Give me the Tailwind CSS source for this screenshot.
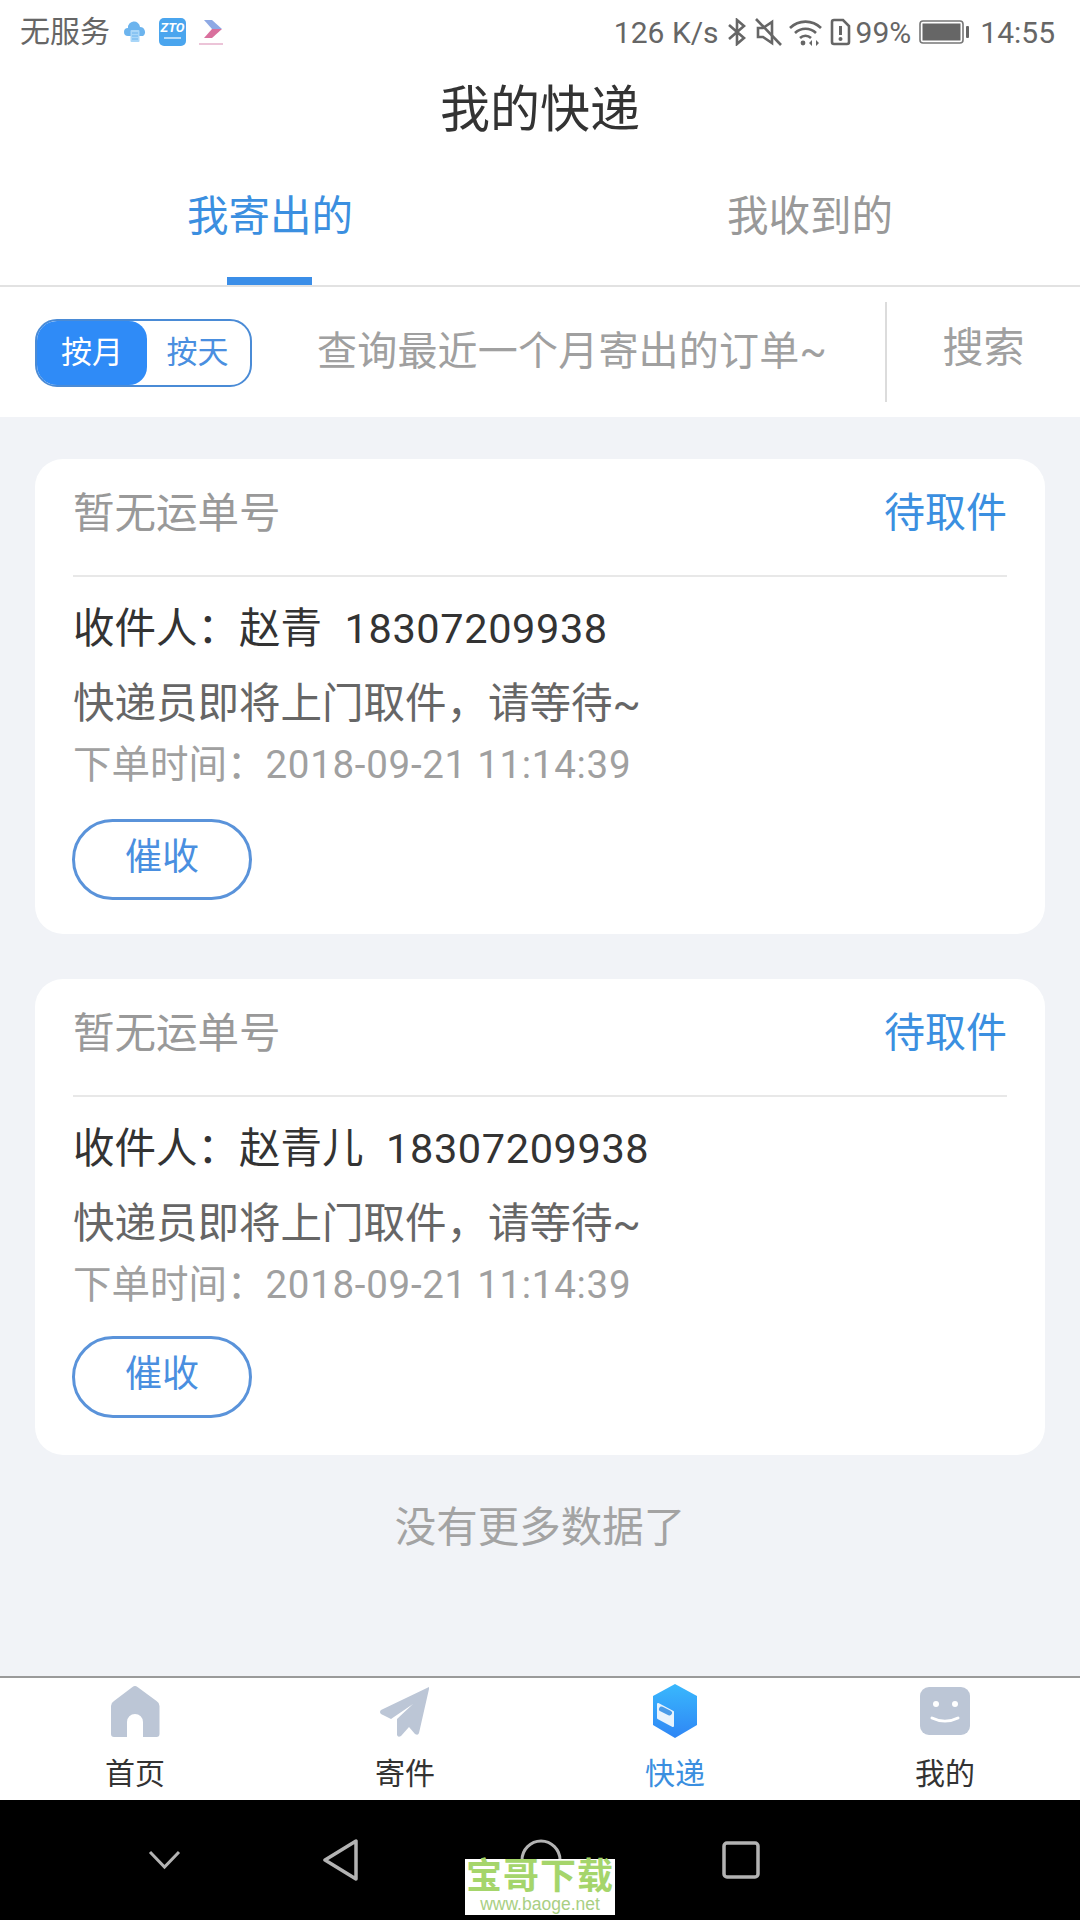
<!doctype html>
<html lang="zh-CN">
<head>
<meta charset="utf-8">
<title>我的快递</title>
<script src="https://cdn.jsdelivr.net/npm/@tailwindcss/browser@4"></script>
</head>
<body class="font-['Roboto','Noto_Sans_CJK_SC',sans-serif]">
<div class="relative w-[1080px] h-[1920px] flex flex-col bg-[#f1f3f7] overflow-hidden">

	<!-- status bar -->
	<div class="h-[64px] bg-white flex items-center pl-[20px] pr-[25px] text-[#666] text-[30px] shrink-0">
		<span class="leading-none">无服务</span>
		<svg class="ml-[14px]" width="22" height="22" viewBox="0 0 22 22"><path d="M4 15a4 4 0 0 1 0-8 6 6 0 0 1 12-1 5 5 0 0 1 3 9z" fill="#6cb4ee"/><rect x="6.500" y="9" width="9" height="12" rx="1" fill="#a9d6f8"/><path d="M8 12h6M8 15h6M8 18h6" stroke="#6cb4ee" stroke-width="1"/></svg>
		<div class="ml-[13px] w-[27px] h-[28px] rounded-[5px] bg-[#4aa5ee] flex flex-col items-center pt-[3px] text-white text-[13px] font-bold italic leading-[13px]">
			ZTO
			<div class="mt-[3px] w-[17px] h-[2px] bg-white/60"></div>
		</div>
		<svg class="ml-[11px]" width="28" height="30" viewBox="0 0 28 30"><path d="M7 3h8l10 9H15z" fill="#8ea9e4"/><path d="M25 12L15 21H7l8-9z" fill="#d9709d"/><path d="M2 27h24" stroke="#ecc4d8" stroke-width="2"/></svg>
		<div class="ml-auto flex items-center">
			<span>126 K/s</span>
			<svg class="ml-[9px]" width="19" height="28" viewBox="0 0 19 28" fill="none" stroke="#666" stroke-width="2.600"><path d="M1 7l15 13-7 6V2l7 6L1 21"/></svg>
			<svg class="ml-[8px]" width="27" height="28" viewBox="0 0 27 28" fill="none" stroke="#666" stroke-width="2.600"><path d="M3 10v9h5l9 6V4l-9 6z"/><path d="M1 1l25 26"/></svg>
			<svg class="ml-[7px]" width="33" height="28" viewBox="0 0 33 28" fill="none" stroke="#666" stroke-width="2.600"><path d="M1 10a22 22 0 0 1 31 0M6 15a15 15 0 0 1 21 0M11 20a8 8 0 0 1 11 0"/><circle cx="14" cy="25" r="2.400" fill="#666" stroke="none"/><path d="M23 22l-3 3 3 3zM27 22l3 3-3 3z" fill="#666" stroke="none"/></svg>
			<svg class="ml-[8px]" width="21" height="28" viewBox="0 0 21 28" fill="none"><path d="M2 4a2 2 0 0 1 2-2h9l6 6v16a2 2 0 0 1-2 2H4a2 2 0 0 1-2-2z" stroke="#666" stroke-width="2.600"/><path d="M10.500 8v9" stroke="#666" stroke-width="3"/><circle cx="10.500" cy="21" r="2" fill="#666"/></svg>
			<span class="ml-[5px]">99%</span>
			<svg class="ml-[8px]" width="51" height="26" viewBox="0 0 51 26"><rect x="1" y="2" width="43" height="22" rx="3" fill="none" stroke="#777" stroke-width="1.600"/><rect x="3.500" y="4.500" width="38" height="17" fill="#666"/><rect x="47" y="7" width="3" height="12" rx="1" fill="#666"/></svg>
			<span class="ml-[10px]">14:55</span>
		</div>
	</div>

	<!-- title -->
	<div class="h-[92px] bg-white flex items-center justify-center text-[50px] text-[#333] shrink-0 leading-none">我的快递</div>

	<!-- tabs -->
	<div class="h-[131px] bg-white border-b-2 border-[#e2e2e2] flex text-[41.500px] shrink-0">
		<div class="relative flex-1 flex items-center justify-center text-[#3b8fe0] pb-[7px]">
			我寄出的
			<div class="absolute bottom-0 left-[227px] w-[85px] h-[8px] bg-[#3b8ee8]"></div>
		</div>
		<div class="flex-1 flex items-center justify-center text-[#999] pb-[7px]">我收到的</div>
	</div>

	<!-- month/day filter and search -->
	<div class="h-[130px] bg-white flex items-center pl-[35px] text-[#a0a0a0] shrink-0">
		<div class="w-[217px] h-[68px] mt-[2px] rounded-[22px] border-2 border-[#4a8bd6] flex text-[31px] leading-none overflow-hidden">
			<div class="w-[110px] bg-[#2f8bf7] text-white rounded-r-[18px] flex items-center justify-center pb-[2px]">按月</div>
			<div class="flex-1 text-[#4a8fe0] flex items-center justify-center pb-[2px] pr-[2px]">按天</div>
		</div>
		<span class="ml-[65px] text-[40px] leading-none tracking-[0.2px] whitespace-nowrap">查询最近一个月寄出的订单~</span>
		<div class="ml-auto w-[2px] h-[100px] bg-[#dcdcdc]"></div>
		<span class="w-[193px] text-center text-[41px] pb-[6px]">搜索</span>
	</div>

	<!-- order list -->
	<div class="flex-1 px-[35px] pt-[42px] flex flex-col gap-[45px]">
		<div class="h-[475px] bg-white rounded-[28px] px-[38px]">
			<div class="h-[118px] border-b-2 border-[#e8e8e8] flex items-center justify-between pb-[6px]">
				<span class="text-[41.500px] text-[#999]">暂无运单号</span>
				<span class="text-[41px] text-[#3b8fe0]">待取件</span>
			</div>
			<div class="mt-[27px] text-[41.500px] leading-[50px] text-[#333]">收件人：赵青&nbsp; <span class="ml-[2px] tracking-[0.6px]">18307209938</span></div>
			<div class="mt-[25px] text-[41.500px] leading-[50px] text-[#666]">快递员即将上门取件，请等待~</div>
			<div class="mt-[11px] text-[38.500px] leading-[50px] text-[#a0a0a0]">下单时间：<span class="tracking-[0.7px]">2018-09-21 11:14:39</span></div>
			<div class="-ml-[1px] mt-[29px] w-[180px] h-[81px] rounded-full border-[3px] border-[#5a93da] flex items-center justify-center text-[37px] text-[#4a8fe0] pb-[4px]">催收</div>
		</div>
		<div class="h-[476px] bg-white rounded-[28px] px-[38px]">
			<div class="h-[118px] border-b-2 border-[#e8e8e8] flex items-center justify-between pb-[6px]">
				<span class="text-[41.500px] text-[#999]">暂无运单号</span>
				<span class="text-[41px] text-[#3b8fe0]">待取件</span>
			</div>
			<div class="mt-[27px] text-[41.500px] leading-[50px] text-[#333]">收件人：赵青儿&nbsp; <span class="ml-[2px] tracking-[0.6px]">18307209938</span></div>
			<div class="mt-[25px] text-[41.500px] leading-[50px] text-[#666]">快递员即将上门取件，请等待~</div>
			<div class="mt-[11px] text-[38.500px] leading-[50px] text-[#a0a0a0]">下单时间：<span class="tracking-[0.7px]">2018-09-21 11:14:39</span></div>
			<div class="-ml-[1px] mt-[26px] w-[180px] h-[82px] rounded-full border-[3px] border-[#5a93da] flex items-center justify-center text-[37px] text-[#4a8fe0] pb-[4px]">催收</div>
		</div>
		<div class="text-center text-[41.500px] text-[#a3a3a3] -mt-[2px] leading-[60px]">没有更多数据了</div>
	</div>

	<!-- bottom tabs -->
	<div class="h-[124px] bg-white border-t-2 border-[#9a9a9a] grid grid-cols-4 shrink-0 text-[30px] text-[#333]">
		<div class="flex flex-col items-center">
			<svg class="mt-[8px]" width="50" height="52" viewBox="0 0 50 52"><path d="M22.500 1a4 4 0 0 1 5 0l19 14a6 6 0 0 1 3 5v28a3 3 0 0 1-3 3H33V36a8 8 0 0 0-16 0v15H4a3 3 0 0 1-3-3V20a6 6 0 0 1 3-5z" fill="#bcc6d6"/></svg>
			<span class="mt-[19px] leading-[34px]">首页</span>
		</div>
		<div class="flex flex-col items-center">
			<svg class="mt-[8px] -ml-[1px]" width="51" height="52" viewBox="18 5 51 52"><path d="M68 6L20 29q-2 2 0 4l10 5 22-15-16 15v16q1 3 4 1l8-9 6 7q3 2 4-1l10-44z" fill="#bcc6d6"/></svg>
			<span class="mt-[19px] leading-[34px]">寄件</span>
		</div>
		<div class="flex flex-col items-center text-[#3b8fe0]">
			<svg class="mt-[6px]" width="48" height="54" viewBox="0 0 44 54"><defs><linearGradient id="box" x1="0" y1="0" x2="0" y2="1"><stop offset="0" stop-color="#39b8fd"/><stop offset="1" stop-color="#2f86f5"/></linearGradient></defs><path d="M22 0l22 12v29L22 54 0 41V12z" fill="url(#box)"/><path d="M5 20l15 8v14L5 34z" fill="#e8f3fd" stroke="#e8f3fd" stroke-width="2" stroke-linejoin="round"/><path d="M8.500 25l8 4" stroke="#4a9be8" stroke-width="5" stroke-linecap="round"/></svg>
			<span class="mt-[19px] leading-[34px]">快递</span>
		</div>
		<div class="flex flex-col items-center">
			<svg class="mt-[9px]" width="50" height="50" viewBox="0 0 50 50"><rect width="50" height="48" rx="9" fill="#bcc6d6"/><circle cx="16" cy="17" r="3" fill="#fff"/><circle cx="35" cy="17" r="3" fill="#fff"/><path d="M12 31c8 4 18 4 26 0" fill="none" stroke="#fff" stroke-width="3" stroke-linecap="round"/></svg>
			<span class="mt-[20px] leading-[34px]">我的</span>
		</div>
	</div>

	<!-- system navigation -->
	<div class="h-[120px] bg-black flex items-center pl-[148px] shrink-0">
		<svg width="33" height="20" viewBox="0 0 33 20" fill="none" stroke="#b3b3b3" stroke-width="3"><path d="M2 2l14.500 15L31 2"/></svg>
		<svg class="ml-[141px]" width="37" height="42" viewBox="0 0 37 42" fill="none" stroke="#b3b3b3" stroke-width="3.500" stroke-linejoin="round"><path d="M34 2v38L3 21z"/></svg>
		<svg class="ml-[161px]" width="42" height="42" viewBox="0 0 42 42" fill="none" stroke="#b3b3b3" stroke-width="3"><circle cx="21" cy="21" r="19"/></svg>
		<svg class="ml-[160px]" width="38" height="38" viewBox="0 0 38 38" fill="none" stroke="#b3b3b3" stroke-width="3.500"><rect x="2" y="2" width="34" height="34" rx="3"/></svg>
	</div>

	<!-- watermark badge over the navigation bar -->
	<div class="absolute left-[465px] top-[1859px] w-[150px] h-[56px] bg-white flex flex-col items-center font-['Liberation_Sans','Noto_Sans_CJK_SC',sans-serif]">
		<span class="text-[36px] leading-[35px] font-bold text-[#a5d56b] tracking-[1px] whitespace-nowrap">宝哥下载</span>
		<span class="text-[17.500px] leading-[21px] text-[#a9cf83] whitespace-nowrap">www.baoge.net</span>
	</div>
</div>
</body>
</html>
